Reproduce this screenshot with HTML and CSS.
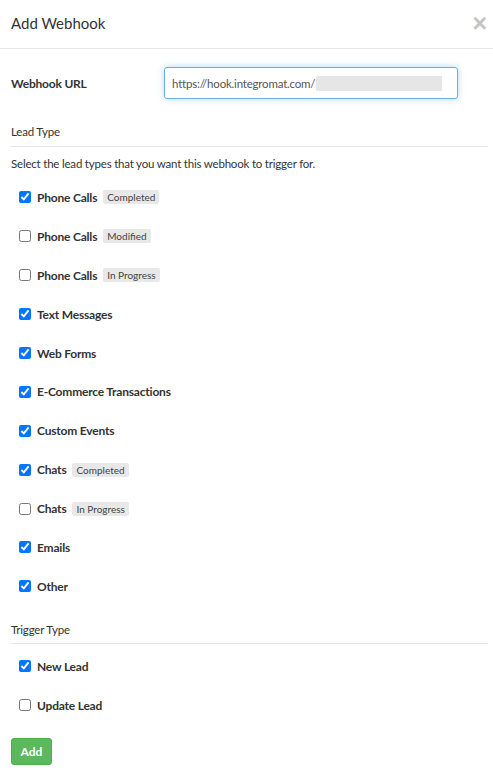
FILE: index.html
```html
<!DOCTYPE html>
<html>
<head>
<meta charset="utf-8">
<link rel="stylesheet" href="styles.css">
</head>
<body>
<div class="modal">
  <div class="modal-header">
    <h4 class="title">Add Webhook</h4>
    <span class="close">&times;</span>
  </div>
  <div class="modal-body">
    <div class="url-row">
      <label class="url-label">Webhook URL</label>
      <div class="url-input"><span class="url-text">https://hook.integromat.com/</span><span class="redacted"></span></div>
    </div>

    <div class="section-title">Lead Type</div>
    <p class="help">Select the lead types that you want this webhook to trigger for.</p>

    <ul class="checks">
      <li><input type="checkbox" checked><span class="lbl">Phone Calls</span><span class="badge">Completed</span></li>
      <li><input type="checkbox"><span class="lbl">Phone Calls</span><span class="badge">Modified</span></li>
      <li><input type="checkbox"><span class="lbl">Phone Calls</span><span class="badge">In Progress</span></li>
      <li><input type="checkbox" checked><span class="lbl">Text Messages</span></li>
      <li><input type="checkbox" checked><span class="lbl">Web Forms</span></li>
      <li><input type="checkbox" checked><span class="lbl">E-Commerce Transactions</span></li>
      <li><input type="checkbox" checked><span class="lbl">Custom Events</span></li>
      <li><input type="checkbox" checked><span class="lbl">Chats</span><span class="badge">Completed</span></li>
      <li><input type="checkbox"><span class="lbl">Chats</span><span class="badge">In Progress</span></li>
      <li><input type="checkbox" checked><span class="lbl">Emails</span></li>
      <li><input type="checkbox" checked><span class="lbl">Other</span></li>
    </ul>

    <div class="section-title trigger">Trigger Type</div>
    <ul class="checks trigger-list">
      <li><input type="checkbox" checked><span class="lbl">New Lead</span></li>
      <li><input type="checkbox"><span class="lbl">Update Lead</span></li>
    </ul>

    <button class="btn-add">Add</button>
  </div>
</div>
</body>
</html>
```

FILE: styles.css
```css
* { box-sizing: border-box; }
html, body { margin: 0; padding: 0; background: #fff; }
body {
  font-family: "Lato", "Open Sans", sans-serif;
  font-size: 11.5px;
  letter-spacing: -0.2px;
  color: #333;
}
.modal { width: 493px; }
.modal-header {
  height: 49px;
  border-bottom: 1px solid #e5e5e5;
  display: flex;
  align-items: center;
  justify-content: space-between;
  padding: 0 6px 3px 11px;
}
.title {
  margin: 0;
  font-size: 15px;
  font-weight: 400;
  letter-spacing: 0;
  color: #333;
}
.close {
  font-size: 25px;
  font-weight: 700;
  color: #c4c4c4;
  line-height: 1;
  font-family: "Liberation Sans", sans-serif;
  margin-top: 2px;
}
.modal-body { padding: 18px 5px 11px 11px; }
.url-row {
  display: flex;
  align-items: center;
}
.url-label {
  width: 153px;
  font-weight: 700;
  font-size: 12px;
}
.url-input {
  width: 294px;
  height: 32px;
  border: 1px solid #66afe9;
  border-radius: 3px;
  box-shadow: 0 0 6px rgba(102,175,233,.5);
  display: flex;
  align-items: center;
  padding-left: 7px;
  color: #555;
}
.redacted {
  display: inline-block;
  width: 126px;
  height: 15px;
  background: #e6e6e6;
  margin-left: 1px;
}
.section-title {
  margin-top: 26px;
  padding-bottom: 8px;
  border-bottom: 1px solid #e5e5e5;
  color: #333;
}
.help { margin: 10px 0 8px; }
.checks { list-style: none; margin: 0; padding: 0 0 0 8px; }
.checks li {
  height: 38.9px;
  display: flex;
  align-items: center;
}
.checks input {
  margin: 0 6px 0 0;
  width: 12px;
  height: 12px;
  accent-color: #0075ff;
}
.lbl { font-weight: 700; font-size: 12px; }
.badge {
  margin-left: 6px;
  background: #e8e8e8;
  border-radius: 2px;
  padding: 1px 4px;
  font-size: 10px;
  letter-spacing: 0;
  color: #444;
}
.section-title.trigger { margin-top: 17px; padding-bottom: 7px; }
.trigger-list { margin-top: 3px; }
.btn-add {
  margin-top: 13px;
  background: #5cb85c;
  border: 1px solid #4cae4c;
  border-radius: 3px;
  color: #fff;
  font-family: inherit;
  font-weight: 700;
  font-size: 12px;
  width: 41px;
  height: 27px;
  padding: 0;
}
```
